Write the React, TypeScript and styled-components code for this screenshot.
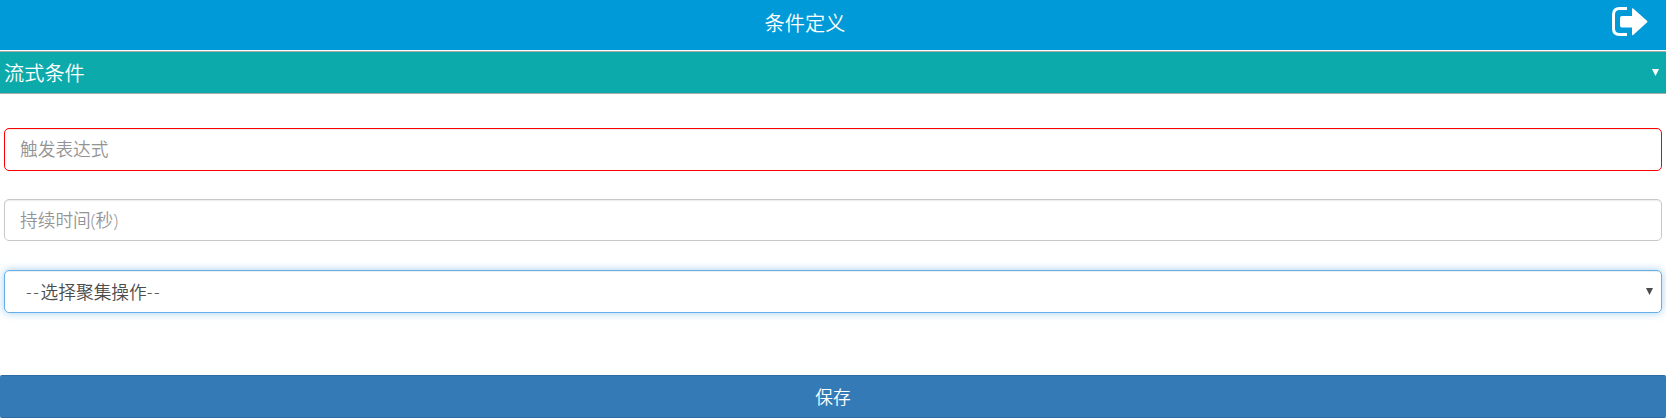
import React from 'react';
import styled, { createGlobalStyle } from 'styled-components';

const GlobalStyle = createGlobalStyle`
  * { box-sizing: border-box; }
  body {
    margin: 0;
    background: #fff;
    overflow: hidden;
    font-family: "Open Sans", "Noto Sans CJK SC", sans-serif;
    font-size: 17.7px;
    font-weight: 350;
  }
`;

const Header = styled.header`
  display: flex;
  align-items: flex-start;
  height: 50px;
  margin-bottom: 1px;
  padding-right: 18px;
  background: #019ad8;
  color: #fff;
`;

const Title = styled.h1`
  flex: 1;
  margin: 0;
  padding-right: 2px;
  text-align: center;
  font: 350 20.2px/45px "Noto Sans CJK SC", sans-serif;
`;

const ExitButton = styled.button`
  display: flex;
  margin-top: 7px;
  padding: 0;
  border: 0;
  background: none;
  color: #fff;
`;

const SectionBar = styled.div`
  display: flex;
  align-items: center;
  justify-content: space-between;
  height: 43px;
  padding: 0 7px 0 4px;
  border: solid #a9a9a9;
  border-width: 1px 0;
  background: #0caaab;
  color: #fff;
  font: 350 20.2px/41px "Noto Sans CJK SC", sans-serif;
`;

const Form = styled.form`
  display: flex;
  flex-direction: column;
`;

const Fields = styled.div`
  display: flex;
  flex-direction: column;
  padding: 34px 4px 0;
`;

const Input = styled.input<{ $invalid?: boolean }>`
  height: ${p => (p.$invalid ? 43 : 42)}px;
  margin: 0 0 28px;
  padding: 0 15px ${p => (p.$invalid ? 2 : 0)}px;
  border: 1px solid ${p => (p.$invalid ? '#f00' : '#c8c8c8')};
  border-radius: 5px;
  outline: 0;
  font: inherit;
  color: #555;
  box-shadow: inset 0 1px 1px rgba(0, 0, 0, 0.075);
  &::placeholder { color: #949494; opacity: 1; }
`;

const SelectBox = styled.div`
  display: flex;
  align-items: center;
  justify-content: space-between;
  height: 43px;
  margin-top: 1px;
  padding: 2px 8px 0 21px;
  border: 1px solid #66afe9;
  border-radius: 5px;
  color: #4c4c4c;
  line-height: 39px;
  box-shadow: inset 0 1px 1px rgba(0, 0, 0, 0.075), 0 0 8px rgba(102, 175, 233, 0.6);
`;

const Dashes = styled.span`
  letter-spacing: 1.6px;
`;

const SaveButton = styled.button`
  height: 43px;
  margin-top: 62px;
  padding: 0 0 2px;
  border: 1px solid #2e6da4;
  border-width: 1px 0;
  border-radius: 2px;
  background: #337ab7;
  color: #fff;
  font: inherit;
`;

const Caret = ({ lift = 0 }: { lift?: number }) => (
  <svg width="7" height={7 + lift} viewBox={`0 0 7 ${7 + lift}`}>
    <path d="M0 0h7L3.5 7z" fill="currentColor" />
  </svg>
);

export default function App() {
  return (
    <>
      <GlobalStyle />
      <Header>
        <Title>条件定义</Title>
        <ExitButton aria-label="退出">
          <svg width="36" height="29" viewBox="0 0 36 29">
            <path d="M15 1.5H7.5Q1.5 1.5 1.5 7.5V21.5Q1.5 27.5 7.5 27.5H15" fill="none" stroke="currentColor" strokeWidth="3" />
            <path d="M10 9H20V2Q20 .8 21.2 1.5L35.2 14.1Q35.7 14.7 35.2 15.3L21.2 28Q20 28.7 20 27.5V20.5H10Q8 20.5 8 18.5V11Q8 9 10 9Z" fill="currentColor" />
          </svg>
        </ExitButton>
      </Header>
      <SectionBar>
        <span>流式条件</span>
        <Caret />
      </SectionBar>
      <Form>
        <Fields>
          <Input $invalid placeholder="触发表达式" />
          <Input placeholder="持续时间(秒)" />
          <SelectBox role="combobox" tabIndex={0}>
            <span><Dashes>--</Dashes>选择聚集操作<Dashes>--</Dashes></span>
            <Caret lift={3} />
          </SelectBox>
        </Fields>
        <SaveButton type="button">保存</SaveButton>
      </Form>
    </>
  );
}
